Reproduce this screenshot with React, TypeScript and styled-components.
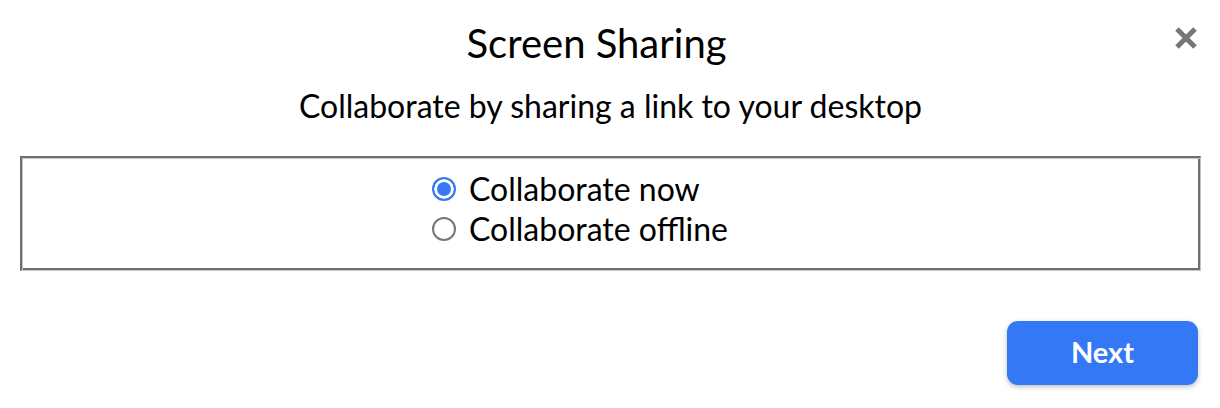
import React, { useState } from 'react';
import styled, { createGlobalStyle } from 'styled-components';

const GlobalStyle = createGlobalStyle`
	body {
		margin: 0;
		background: #ffffff;
		font-family: Lato, 'Open Sans', sans-serif;
		color: #000000;
	}
`;

type Mode = 'now' | 'offline';

const options: { value: Mode; label: string }[] = [
	{ value: 'now', label: 'Collaborate now' },
	{ value: 'offline', label: 'Collaborate offline' },
];

const ScreenSharingDialog: React.FC = () => {
	const [mode, setMode] = useState<Mode>('now');

	return (
		<Dialog>
			<Header>
				<Title>Screen Sharing</Title>
				<CloseButton aria-label="Close">
					<svg width="24" height="24" viewBox="0 0 24 24">
						<path d="M3 3 L21 21 M21 3 L3 21" stroke="#767676" strokeWidth="5" />
					</svg>
				</CloseButton>
			</Header>
			<Subtitle>Collaborate by sharing a link to your desktop</Subtitle>
			<OptionsBox>
				<OptionList>
					{options.map((option) => (
						<OptionRow key={option.value}>
							<Radio
								type="radio"
								name="mode"
								value={option.value}
								checked={mode === option.value}
								onChange={() => setMode(option.value)}
							/>
							{option.label}
						</OptionRow>
					))}
				</OptionList>
			</OptionsBox>
			<Footer>
				<NextButton>Next</NextButton>
			</Footer>
		</Dialog>
	);
};

export default function App() {
	return (
		<>
			<GlobalStyle />
			<ScreenSharingDialog />
		</>
	);
}

const Dialog = styled.div`
	width: 1220px;
	height: 408px;
	box-sizing: border-box;
	padding: 0 19px 0 20px;
	display: flex;
	flex-direction: column;
`;

const Header = styled.div`
	display: flex;
	align-items: flex-start;
	padding-top: 17px;
`;

const Title = styled.h1`
	flex: 1;
	margin: 0;
	text-align: center;
	font-size: 40px;
	font-weight: 400;
	line-height: 52px;
`;

const CloseButton = styled.button`
	border: none;
	background: none;
	padding: 0;
	margin: 9px 2px 0 0;
	width: 26px;
	height: 24px;
	cursor: pointer;
	display: flex;
	align-items: center;
	justify-content: center;
`;

const Subtitle = styled.p`
	margin: 17px 0 0;
	text-align: center;
	font-size: 32px;
	line-height: 40px;
`;

const OptionsBox = styled.fieldset`
	margin: 30px 0 0;
	padding: 11px 0 21px;
	min-width: 0;
	border-style: solid;
	border-width: 2px 1px 1px 2px;
	border-color: #6f6f6f #c4c4c4 #c4c4c4 #6f6f6f;
	box-shadow: inset 1px 1px 0 #c4c4c4, inset -2px -2px 0 #6f6f6f;
`;

const OptionList = styled.div`
	width: 358px;
	margin: 0 auto;
	display: flex;
	flex-direction: column;
	align-items: flex-start;
`;

const OptionRow = styled.label`
	display: flex;
	align-items: center;
	gap: 13px;
	font-size: 32px;
	line-height: 40px;
	cursor: pointer;
`;

const Radio = styled.input`
	appearance: none;
	margin: 0;
	width: 24px;
	height: 24px;
	border-radius: 50%;
	box-sizing: border-box;
	border: 2px solid #767676;
	background: #ffffff;
	cursor: pointer;

	&:checked {
		border-color: #3478f6;
		background: #3478f6;
		box-shadow: inset 0 0 0 3px #ffffff;
	}
`;

const Footer = styled.div`
	display: flex;
	justify-content: flex-end;
	padding: 50px 3px 0 0;
`;

const NextButton = styled.button`
	width: 191px;
	height: 64px;
	padding: 0 0 4px;
	border: none;
	border-radius: 11px;
	background: #3478f6;
	color: #ffffff;
	font-family: Lato, 'Open Sans', sans-serif;
	font-weight: 700;
	font-size: 29px;
	box-shadow: 0 2px 5px rgba(0, 0, 0, 0.25);
	cursor: pointer;
`;
